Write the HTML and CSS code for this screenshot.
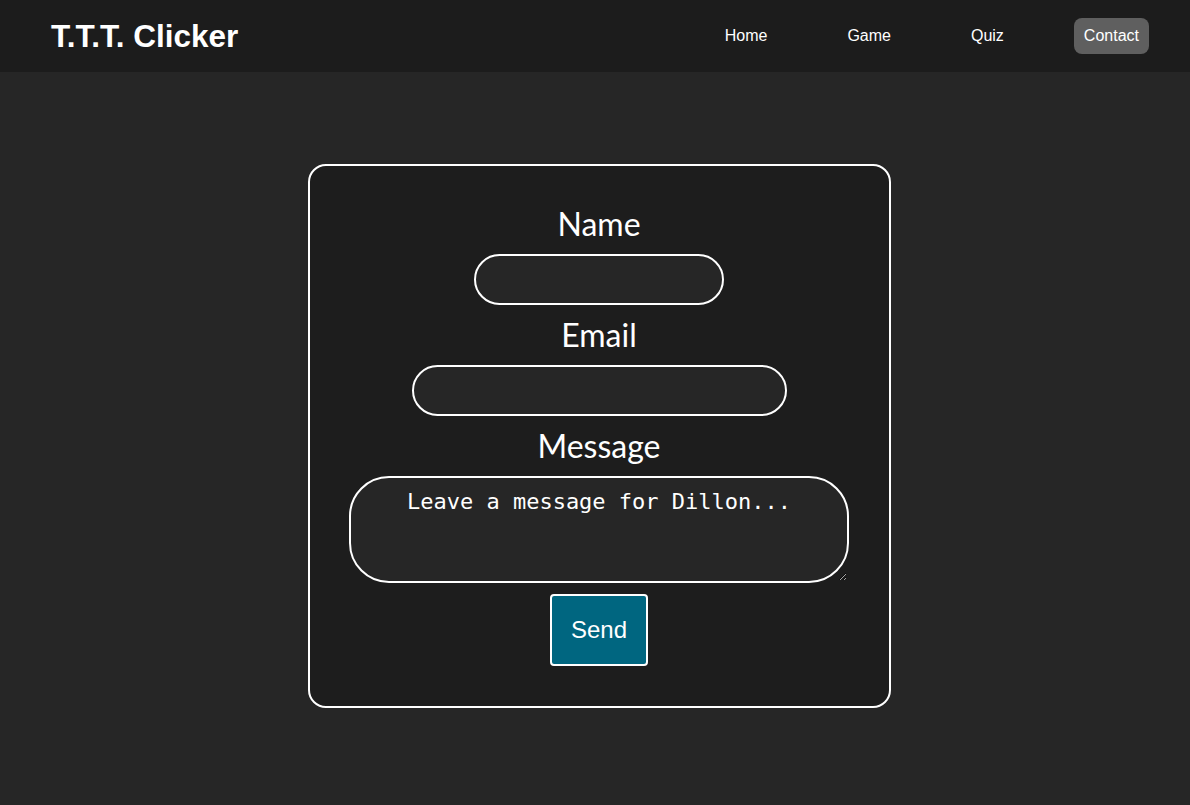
FILE: index.html
```html
<!DOCTYPE html>
<html lang="en">
<head>
<meta charset="utf-8">
<title>Contact - T.T.T. Clicker</title>
<link rel="stylesheet" href="styles.css">
</head>
<body>
<header class="topbar">
  <div class="logo">T.T.T. Clicker</div>
  <nav class="nav">
    <a class="nav-link" href="#">Home</a>
    <a class="nav-link" href="#">Game</a>
    <a class="nav-link" href="#">Quiz</a>
    <a class="nav-link active" href="#">Contact</a>
  </nav>
</header>
<main class="main">
  <form class="card">
    <label class="label" for="name">Name</label>
    <input class="field field-name" id="name" type="text">
    <label class="label" for="email">Email</label>
    <input class="field field-email" id="email" type="email">
    <label class="label" for="msg">Message</label>
    <textarea class="field field-msg" id="msg" placeholder="Leave a message for Dillon..."></textarea>
    <button class="send" type="button">Send</button>
  </form>
</main>
</body>
</html>
```
FILE: styles.css
```css
* { box-sizing: border-box; }
html, body { margin: 0; padding: 0; }
body {
  background: #262626;
  color: #ffffff;
  font-family: "Liberation Sans", Arial, sans-serif;
  min-height: 805px;
}
.topbar {
  height: 72px;
  background: #1c1c1c;
  display: flex;
  align-items: center;
  justify-content: space-between;
  padding: 0 41px 0 51px;
}
.logo {
  font-size: 31.5px;
  font-weight: bold;
  color: #ffffff;
}
.nav {
  display: flex;
  gap: 60px;
  align-items: center;
}
.nav-link {
  color: #ffffff;
  text-decoration: none;
  font-size: 16px;
  line-height: 18px;
  padding: 9px 10px;
  border-radius: 8px;
}
.nav-link.active {
  background: #5f5f5f;
}
.main {
  padding-top: 92px;
  padding-left: 8px;
  display: flex;
  justify-content: center;
}
.card {
  width: 583px;
  height: 544px;
  background: #1d1d1d;
  border: 2px solid #ffffff;
  border-radius: 18px;
  display: flex;
  flex-direction: column;
  align-items: center;
  padding-top: 39px;
}
.label {
  font-family: Lato, "Open Sans", sans-serif;
  font-size: 32px;
  line-height: 38px;
  margin-bottom: 11px;
}
.field {
  background: #262626;
  border: 2px solid #ffffff;
  color: #ffffff;
  outline: none;
  margin: 0 0 11px 0;
  display: block;
}
.field-name {
  width: 250px;
  height: 51px;
  border-radius: 26px;
}
.field-email {
  width: 375px;
  height: 51px;
  border-radius: 26px;
}
.field-msg {
  width: 500px;
  height: 107px;
  border-radius: 40px;
  font-family: "DejaVu Sans Mono", "Liberation Mono", monospace;
  font-size: 22px;
  text-align: center;
  padding: 11px 20px 10px;
  resize: both;
}
.field-msg::placeholder {
  color: #ffffff;
  opacity: 1;
}
.send {
  background: #006680;
  color: #ffffff;
  border: 2px solid #ffffff;
  border-radius: 4px;
  font-family: "Liberation Sans", Arial, sans-serif;
  font-size: 24px;
  padding: 20px 19px;
  line-height: 28px;
}
```
